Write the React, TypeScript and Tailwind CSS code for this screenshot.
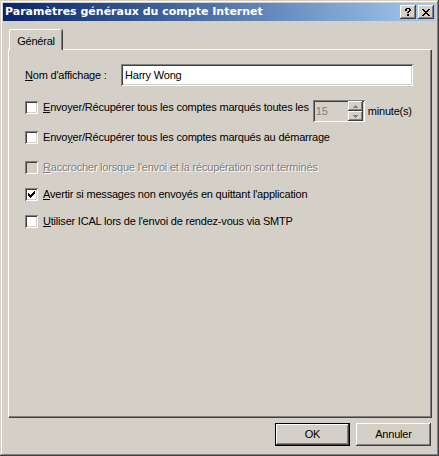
import React from "react";

const raised =
  "shadow-[inset_-1px_-1px_#404040,inset_1px_1px_#ffffff,inset_-2px_-2px_#808080,inset_2px_2px_#d4d0c8]";
const sunken =
  "shadow-[inset_1px_1px_#808080,inset_-1px_-1px_#ffffff,inset_2px_2px_#404040,inset_-2px_-2px_#d4d0c8]";

function Key({ children }: { children: React.ReactNode }) {
  return <span className="underline underline-offset-[1px]">{children}</span>;
}

function CheckBox({ checked, disabled }: { checked?: boolean; disabled?: boolean }) {
  return (
    <span
      className={`flex size-[13px] shrink-0 items-center justify-center ${sunken} ${
        disabled ? "bg-[#d4d0c8]" : "bg-white"
      }`}
    >
      {checked && (
        <svg width="7" height="7" viewBox="0 0 7 7" shapeRendering="crispEdges">
          <path d="M0 2h1v3H0zM1 3h1v3H1zM2 4h1v3H2zM3 3h1v3H3zM4 2h1v3H4zM5 1h1v3H5zM6 0h1v3H6z" fill="#000" />
        </svg>
      )}
    </span>
  );
}

function CheckRow({
  checked,
  disabled,
  children,
  className = "",
}: {
  checked?: boolean;
  disabled?: boolean;
  children: React.ReactNode;
  className?: string;
}) {
  return (
    <div className={`flex h-[13px] items-center gap-[5px] ${className}`}>
      <CheckBox checked={checked} disabled={disabled} />
      <span
        className={`whitespace-nowrap leading-[13px] ${
          disabled ? "text-[#808080] [text-shadow:1px_1px_0_#ffffff]" : "text-black"
        }`}
      >
        {children}
      </span>
    </div>
  );
}

function SpinArrow({ up }: { up?: boolean }) {
  return (
    <span className={`flex h-[10px] w-[15px] items-center justify-center bg-[#d4d0c8] ${raised}`}>
      <svg width="5" height="3" viewBox="0 0 5 3" shapeRendering="crispEdges">
        {up ? (
          <path d="M2 0h1v1H2zM1 1h3v1H1zM0 2h5v1H0z" fill="#808080" />
        ) : (
          <path d="M0 0h5v1H0zM1 1h3v1H1zM2 2h1v1H2z" fill="#808080" />
        )}
      </svg>
    </span>
  );
}

export default function App() {
  return (
    <div
      className="relative h-[456px] w-[439px] bg-[#d4d0c8] p-[3px] text-[11px] tracking-[-0.2px] text-black shadow-[inset_-1px_-1px_#404040,inset_1px_1px_#d4d0c8,inset_-2px_-2px_#808080,inset_2px_2px_#ffffff]"
      style={{ fontFamily: '"Liberation Sans", Arial, sans-serif' }}
    >
      {/* title bar */}
      <div className="flex h-[18px] items-center bg-linear-to-r from-[#0a246a] to-[#a6caf0] pl-[2px] pr-[2px]">
        <span
          className="flex-1 whitespace-nowrap text-[11px] font-bold tracking-normal text-white"
          style={{ fontFamily: '"DejaVu Sans", sans-serif' }}
        >
          Paramètres généraux du compte Internet
        </span>
        <div className="flex gap-[2px]">
          <span className={`flex h-[14px] w-[16px] items-center justify-center bg-[#d4d0c8] ${raised}`}>
            <svg width="6" height="8" viewBox="0 0 6 8" shapeRendering="crispEdges">
              <path d="M1 0h4v1H1zM0 1h2v2H0zM4 1h2v2H4zM3 3h2v1H3zM2 4h2v1H2zM2 6h2v2H2z" fill="#000" />
            </svg>
          </span>
          <span className={`flex h-[14px] w-[16px] items-center justify-center bg-[#d4d0c8] ${raised}`}>
            <svg width="8" height="7" viewBox="0 0 8 7" shapeRendering="crispEdges">
              <path d="M0 0h2v1H0zM6 0h2v1H6zM1 1h2v1H1zM5 1h2v1H5zM2 2h4v1H2zM3 3h2v1H3zM2 4h4v1H2zM1 5h2v1H1zM5 5h2v1H5zM0 6h2v1H0zM6 6h2v1H6z" fill="#000" />
            </svg>
          </span>
        </div>
      </div>

      <div className="px-[5px]">
        {/* tab strip */}
        <div className="mt-[8px] flex">
          <div className="relative z-10 -mb-px ml-[1px] flex h-[21px] w-[53px] items-start justify-center rounded-t-[2px] border-l border-t border-white bg-[#d4d0c8] pt-[3px] shadow-[inset_-1px_0_#808080,1px_0_#404040]">
            Général
          </div>
        </div>

        {/* tab panel */}
        <div className="h-[368px] w-[423px] border-l border-t border-white pl-[16px] pt-[14px] shadow-[inset_-1px_-1px_#808080,1px_1px_#404040]">
          <div className="flex h-[22px] items-center">
            <span className="w-[96px] whitespace-nowrap">
              <Key>N</Key>om d'affichage :
            </span>
            <div className={`flex h-[22px] w-[292px] items-center bg-white pl-[4px] ${sunken}`}>Harry Wong</div>
          </div>

          <div className="mt-[14px] flex h-[22px] items-start">
            <CheckRow className="mt-[1px]">
              <Key>E</Key>nvoyer/Récupérer tous les comptes marqués toutes les
            </CheckRow>
            <div className={`ml-[4px] flex h-[22px] w-[52px] items-center justify-between bg-[#d4d0c8] p-[2px] ${sunken}`}>
              <span className="pl-[1px] text-[#808080]">15</span>
              <div className="flex flex-col">
                <SpinArrow up />
                <SpinArrow />
              </div>
            </div>
            <span className="ml-[3px] mt-[5px] leading-[13px]">minute(s)</span>
          </div>

          <CheckRow className="mt-[9px]">
            Envo<Key>y</Key>er/Récupérer tous les comptes marqués au démarrage
          </CheckRow>

          <CheckRow className="mt-[17px]" disabled>
            <Key>R</Key>accrocher lorsque l'envoi et la récupération sont terminés
          </CheckRow>

          <CheckRow className="mt-[14px]" checked>
            <Key>A</Key>vertir si messages non envoyés en quittant l'application
          </CheckRow>

          <CheckRow className="mt-[14px]">
            <Key>U</Key>tiliser ICAL lors de l'envoi de rendez-vous via SMTP
          </CheckRow>
        </div>

        {/* buttons */}
        <div className="mt-[6px] flex w-[423px] justify-end gap-[6px]">
          <button className="flex h-[23px] w-[75px] items-center justify-center border border-black bg-[#d4d0c8] shadow-[inset_-1px_-1px_#404040,inset_1px_1px_#ffffff,inset_-2px_-2px_#808080]">
            OK
          </button>
          <button className={`flex h-[23px] w-[75px] items-center justify-center bg-[#d4d0c8] ${raised}`}>
            Annuler
          </button>
        </div>
      </div>
    </div>
  );
}
